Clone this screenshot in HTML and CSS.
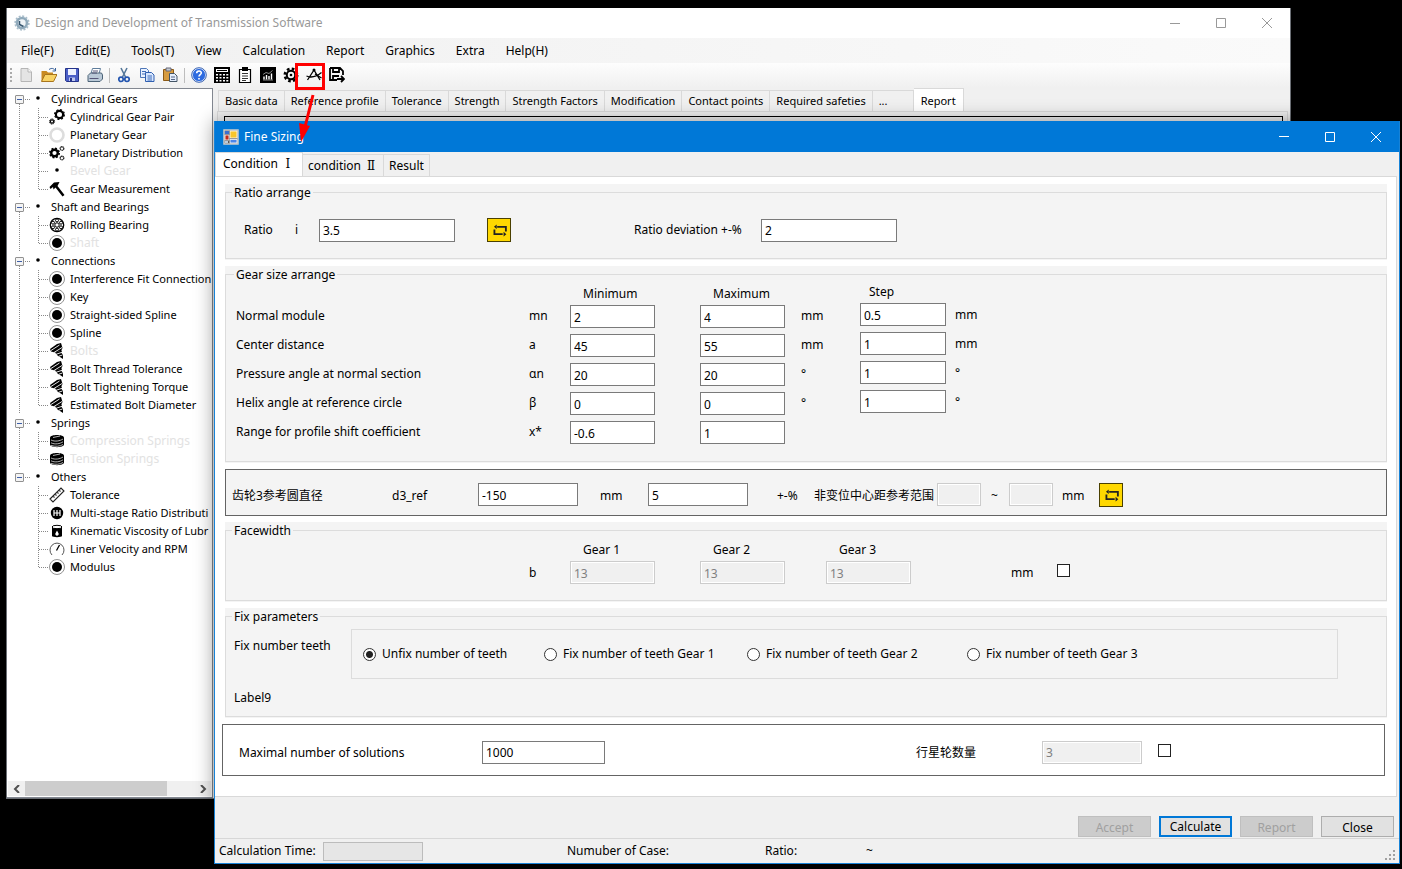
FILE: index.html
```html
<!DOCTYPE html>
<html lang="en">
<head>
  <meta charset="utf-8">
  <title>Design and Development of Transmission Software</title>
  <link rel="stylesheet" href="styles.css">
</head>
<body>

<!-- shared icons -->
<svg class="defs" aria-hidden="true">
  <symbol id="dot" viewBox="0 0 16 16"><circle cx="8" cy="7" r="1.8"/></symbol>
  <symbol id="disc" viewBox="0 0 16 16"><circle cx="8" cy="8" r="7.5" fill="#fff" stroke="#777" stroke-width=".8"/><circle cx="8" cy="8" r="5"/></symbol>
  <symbol id="gear" viewBox="0 0 16 16">
    <circle cx="8" cy="8" r="4.2" fill="none" stroke="#000" stroke-width="2"/>
    <circle cx="8" cy="8" r="6.2" fill="none" stroke="#000" stroke-width="2.6" stroke-dasharray="2.6 2.27"/>
    <circle cx="8" cy="8" r="1.3"/>
  </symbol>
  <symbol id="pair" viewBox="0 0 16 16">
    <circle cx="10.5" cy="5.5" r="3.6" fill="none" stroke="#000" stroke-width="2.2"/>
    <circle cx="10.5" cy="5.5" r="4.9" fill="none" stroke="#000" stroke-width="1.2" stroke-dasharray="2 1.85"/>
    <circle cx="3" cy="12.5" r="1.6" fill="none" stroke="#000" stroke-width="1.2"/>
    <circle cx="3" cy="12.5" r="2.6" fill="none" stroke="#000" stroke-width="1" stroke-dasharray="1.2 .84"/>
  </symbol>
  <symbol id="ring" viewBox="0 0 16 16"><circle cx="8" cy="8" r="6.5" fill="none" stroke="#ddd" stroke-width="2.6"/></symbol>
  <symbol id="gears" viewBox="0 0 16 16">
    <circle cx="5.5" cy="8" r="3.3" fill="none" stroke="#000" stroke-width="2.4"/>
    <circle cx="5.5" cy="8" r="4.7" fill="none" stroke="#000" stroke-width="1.6" stroke-dasharray="1.9 1.79"/>
    <circle cx="13" cy="3.5" r="1.8" fill="none" stroke="#222" stroke-width="1.3" stroke-dasharray="1.3 .3"/>
    <circle cx="13" cy="13" r="1.8" fill="none" stroke="#222" stroke-width="1.3" stroke-dasharray="1.3 .3"/>
  </symbol>
  <symbol id="caliper" viewBox="0 0 16 16"><path d="M.5 6 5 1.500 10.500 1 8.500 5 15.500 14 13.500 15.500 6.500 6.500 4.500 8.500 4 6 1.500 8z"/></symbol>
  <symbol id="bearing" viewBox="0 0 16 16">
    <circle cx="8" cy="8" r="6.7" fill="#fff" stroke="#000" stroke-width="1.3"/>
    <circle cx="8" cy="8" r="2.2" fill="none" stroke="#000"/>
    <g fill="#fff" stroke="#000"><circle cx="8" cy="3.4" r="1.5"/><circle cx="12" cy="5.7" r="1.5"/><circle cx="12" cy="10.3" r="1.5"/><circle cx="8" cy="12.6" r="1.5"/><circle cx="4" cy="10.3" r="1.5"/><circle cx="4" cy="5.7" r="1.5"/></g>
  </symbol>
  <symbol id="bolt" viewBox="0 0 16 16">
    <path d="M1 6 8 1 12 0 13.500 5 12 8 6 9.500 2 8.500z"/>
    <path d="M6 9.500 13 7.500 12.500 10 14 12 14 16 11 14 9 13z"/>
    <path d="M2 7.500 10.500 2M5 9.500 13 4.500M7 11.300 13 9.300M9.500 13.300 13.500 12" stroke="#fff" stroke-width=".9"/>
  </symbol>
  <symbol id="spring" viewBox="0 0 16 16">
    <path d="M1 4.500C1 1 15 1 15 4.500V11.500C15 15 1 15 1 11.500z"/>
    <path d="M4 4.500 11 3M2 7C6 9 11 8 14 6M2 9.800C6 11.800 11 10.800 14 8.800M2 12.300C6 14 11 13.400 14 11.500" fill="none" stroke="#fff" stroke-width=".7"/>
  </symbol>
  <symbol id="ruler" viewBox="0 0 16 16"><path d="M1 12 12 1 15 4 4 15zM4 9l1.500 1.500M6 7l1.500 1.500M8 5l1.500 1.500M10 3l1.500 1.500" fill="#fff" stroke="#222" stroke-width="1.1"/></symbol>
  <symbol id="stage" viewBox="0 0 16 16"><circle cx="8" cy="8" r="6.2"/><path d="M5 5v6M8 5v6M11 5v6M5 8h6" stroke="#fff" stroke-width="1.2"/></symbol>
  <symbol id="drum" viewBox="0 0 16 16"><path d="M3 4V13C3 14.500 13 14.500 13 13V4z"/><ellipse cx="8" cy="4" rx="5" ry="1.7" fill="#fff" stroke="#000"/><path d="M8 7.500 9.600 10.500A1.700 1.700 0 1 1 6.400 10.500z" fill="#fff"/></symbol>
  <symbol id="gauge" viewBox="0 0 16 16"><path d="M3 14A7 7 0 1 1 13 14" fill="none" stroke="#555"/><path d="M7.500 9.500 10.500 4" stroke="#000" stroke-width="1.3"/></symbol>
  <symbol id="swap" viewBox="0 0 24 24">
    <path d="M19.500 13.500V8.500H10M7 11.500V16.500H16" fill="none" stroke="#222" stroke-width="2"/>
    <path d="M6.500 8.500 9.500 6V11zM20 16.500 17 14V19z" fill="#222"/>
  </symbol>
</svg>

<div class="window main">
  <header class="titlebar">
    <svg class="icon" viewBox="0 0 16 16"><circle cx="8" cy="8" r="5" fill="#eef3f6" stroke="#8fa9ba" stroke-width="2.6"/><circle cx="8" cy="8" r="6.8" fill="none" stroke="#a9bdca" stroke-width="1.8" stroke-dasharray="2 1.56"/><path d="M5.500 6v3.500l4 2" fill="none" stroke="#35566f" stroke-width="1.5"/></svg>
    <h1>Design and Development of Transmission Software</h1>
    <div class="controls">
      <button aria-label="Minimize"><svg viewBox="0 0 10 10"><path d="M0 5.500h10"/></svg></button>
      <button aria-label="Maximize"><svg viewBox="0 0 10 10"><path d="M.5.500h9v9h-9z"/></svg></button>
      <button aria-label="Close"><svg viewBox="0 0 10 10"><path d="M0 0l10 10M10 0 0 10"/></svg></button>
    </div>
  </header>
  <nav class="menubar">
    <button>File(F)</button><button>Edit(E)</button><button>Tools(T)</button><button>View</button><button>Calculation</button><button>Report</button><button>Graphics</button><button>Extra</button><button>Help(H)</button>
  </nav>
  <div class="toolbar">
    <span class="handle"></span>
    <button aria-label="New"><svg viewBox="0 0 16 16"><path d="M3 1.500h7l3.500 3.500v9.500H3z" fill="#e4e4e4" stroke="#b5b5b5"/><path d="M10 1.500V5h3.500" fill="#fafafa" stroke="#b5b5b5"/></svg></button>
    <button aria-label="Open"><svg viewBox="0 0 16 16"><path d="M.5 14V4h5l1.500 1.500h5V14z" fill="#c98a20"/><path d="M.5 14.500 4 7.500h12L12.500 14.500z" fill="#f8d264" stroke="#a8751c"/><path d="M8 2.500c3-2 5-1 6 1M14.500 1v3h-3" fill="none" stroke="#39629b"/></svg></button>
    <button aria-label="Save"><svg viewBox="0 0 16 16"><path d="M1.500 1.500h13v13h-12l-1-1z" fill="#4b5fc7" stroke="#24338a"/><path d="M4 2h8v6H4z" fill="#eef2ff"/><path d="M5 10.500h6V14H5z" fill="#bfc8ee"/><path d="M6 11h2v3H6z" fill="#24338a"/></svg></button>
    <button aria-label="Print"><svg viewBox="0 0 16 16"><path d="M5.500 1.500h8l-2 7h-8z" fill="#fff" stroke="#5e7d9b"/><path d="M1 8.500 3.500 6h11L15.500 8v4L13 14.500H1z" fill="#bac9d7" stroke="#4d6478"/><path d="M2.500 11.500h9M6 4h5M5 6h5" stroke="#557"/></svg></button>
    <span class="sep"></span>
    <button aria-label="Cut"><svg viewBox="0 0 16 16"><path d="M5 1 9.500 10M11 1 6.500 10" stroke="#56789a" stroke-width="1.6"/><circle cx="5" cy="12.3" r="2.2" fill="none" stroke="#2456b0" stroke-width="1.7"/><circle cx="11" cy="12.3" r="2.2" fill="none" stroke="#2456b0" stroke-width="1.7"/></svg></button>
    <button aria-label="Copy"><svg viewBox="0 0 16 16"><path d="M1.500 1.500h6l2 2v7h-8z" fill="#e9f1ff" stroke="#4f77b8"/><path d="M6.500 5.500h6l2.500 2.500v6.500H6.500z" fill="#d7e6ff" stroke="#2f5fb0"/><path d="M3 4.500h4M3 7h3M8.500 9h4.500M8.500 11h4.500M8.500 13h4.500" stroke="#3f6cb8"/></svg></button>
    <button aria-label="Paste"><svg viewBox="0 0 16 16"><path d="M1.500 2.500h10v11h-10z" fill="#d79c40" stroke="#8b5a16"/><path d="M4 1h5v3H4z" fill="#c5ccd4" stroke="#667"/><path d="M7.500 6.500h5l2.500 2.500v5.500H7.500z" fill="#e4edfb" stroke="#456"/><path d="M9 10h4M9 12.500h4" stroke="#568"/></svg></button>
    <span class="sep"></span>
    <button aria-label="Help"><svg viewBox="0 0 16 16"><circle cx="8" cy="8" r="6.6" fill="#2d6be0" stroke="#e3edff"/><circle cx="8" cy="8" r="7.3" fill="none" stroke="#2451a8" stroke-width=".9"/><path d="M5.700 6.300C5.700 3.300 10.500 3.400 10.300 6 10.200 7.600 8 7.700 8 9.500M8 11v1.500" fill="none" stroke="#fff" stroke-width="1.6"/></svg></button>
    <button aria-label="Calculator"><svg viewBox="0 0 16 16"><path d="M0 0h16v16H0z"/><path d="M2 2h12v3H2zM2 7h2v1.500H2zM5.500 7h2v1.500h-2zM9 7h2v1.500H9zM12.300 7h2v1.500h-2zM2 10h2v1.500H2zM5.500 10h2v1.500h-2zM9 10h2v1.500H9zM12.300 10h2v1.500h-2zM2 13h2v1.500H2zM5.500 13h2v1.500h-2zM9 13h2v1.500H9zM12.300 13h2v1.500h-2z" fill="#fff"/><path d="M3 3.500h10" stroke="#000"/></svg></button>
    <button aria-label="Protocol"><svg viewBox="0 0 16 16"><path d="M2.500 2.500h11v13h-11z" fill="#fff" stroke="#000" stroke-width="1.2"/><path d="M5 0h6v4H5z"/><path d="M5 6.500h6M5 9h6M5 11.500h6M5 13.500h4" stroke="#333"/></svg></button>
    <button aria-label="Chart"><svg viewBox="0 0 16 16"><path d="M0 0h16v16H0z"/><path d="M4 12.500V9.500M6.500 12.500V8M9 12.500V9M11.500 12.500V6.500" stroke="#fff" stroke-width="1.4"/><path d="M3 7.500 6 5.500l3 1L12.500 3.500M3 13h10" fill="none" stroke="#aaa" stroke-width=".8"/></svg></button>
    <button aria-label="Settings"><svg><use href="#gear"/></svg></button>
    <button aria-label="Fine sizing"><svg viewBox="0 0 16 16"><path d="M8 3 1.500 13M8 3l6 10M.5 9C5 11 10 10 15.500 5.500M9 7l6.500 4" fill="none" stroke="#000" stroke-width="1.3"/><circle cx="8" cy="3" r="1.5"/></svg></button>
    <button aria-label="Save as"><svg viewBox="0 0 16 16"><path d="M1 1h10l3 3v4M1 1v12h7M4 1v4h6V1M4 13V9h6" fill="none" stroke="#000" stroke-width="1.8"/><path d="M8 12h6M12 9l3 3-3 3" fill="none" stroke="#000" stroke-width="1.8"/></svg></button>
  </div>

  <div class="workspace">
    <aside class="sidebar">
      <ul class="tree">
        <li>
          <div class="root"><button class="expander" aria-label="Collapse"></button><i class="twig"></i><svg><use href="#dot"/></svg>Cylindrical Gears</div>
          <ul>
            <li><i class="twig"></i><svg><use href="#pair"/></svg>Cylindrical Gear Pair</li>
            <li><i class="twig"></i><svg><use href="#ring"/></svg>Planetary Gear</li>
            <li><i class="twig"></i><svg><use href="#gears"/></svg>Planetary Distribution</li>
            <li class="off"><i class="twig"></i><svg><use href="#dot"/></svg>Bevel Gear</li>
            <li><i class="twig"></i><svg><use href="#caliper"/></svg>Gear Measurement</li>
          </ul>
        </li>
        <li>
          <div class="root"><button class="expander" aria-label="Collapse"></button><i class="twig"></i><svg><use href="#dot"/></svg>Shaft and Bearings</div>
          <ul>
            <li><i class="twig"></i><svg><use href="#bearing"/></svg>Rolling Bearing</li>
            <li class="off"><i class="twig"></i><svg><use href="#disc"/></svg>Shaft</li>
          </ul>
        </li>
        <li>
          <div class="root"><button class="expander" aria-label="Collapse"></button><i class="twig"></i><svg><use href="#dot"/></svg>Connections</div>
          <ul>
            <li><i class="twig"></i><svg><use href="#disc"/></svg>Interference Fit Connection</li>
            <li><i class="twig"></i><svg><use href="#disc"/></svg>Key</li>
            <li><i class="twig"></i><svg><use href="#disc"/></svg>Straight-sided Spline</li>
            <li><i class="twig"></i><svg><use href="#disc"/></svg>Spline</li>
            <li class="off"><i class="twig"></i><svg><use href="#bolt"/></svg>Bolts</li>
            <li><i class="twig"></i><svg><use href="#bolt"/></svg>Bolt Thread Tolerance</li>
            <li><i class="twig"></i><svg><use href="#bolt"/></svg>Bolt Tightening Torque</li>
            <li><i class="twig"></i><svg><use href="#bolt"/></svg>Estimated Bolt Diameter</li>
          </ul>
        </li>
        <li>
          <div class="root"><button class="expander" aria-label="Collapse"></button><i class="twig"></i><svg><use href="#dot"/></svg>Springs</div>
          <ul>
            <li class="off"><i class="twig"></i><svg><use href="#spring"/></svg>Compression Springs</li>
            <li class="off"><i class="twig"></i><svg><use href="#spring"/></svg>Tension Springs</li>
          </ul>
        </li>
        <li>
          <div class="root"><button class="expander" aria-label="Collapse"></button><i class="twig"></i><svg><use href="#dot"/></svg>Others</div>
          <ul>
            <li><i class="twig"></i><svg><use href="#ruler"/></svg>Tolerance</li>
            <li><i class="twig"></i><svg><use href="#stage"/></svg>Multi-stage Ratio Distributi</li>
            <li><i class="twig"></i><svg><use href="#drum"/></svg>Kinematic Viscosity of Lubr</li>
            <li><i class="twig"></i><svg><use href="#gauge"/></svg>Liner Velocity and RPM</li>
            <li><i class="twig"></i><svg><use href="#disc"/></svg>Modulus</li>
          </ul>
        </li>
      </ul>
      <div class="scrollbar">
        <button aria-label="Scroll left"><svg viewBox="0 0 8 8"><path d="M6 0 2 4l4 4"/></svg></button>
        <span class="thumb"></span>
        <button aria-label="Scroll right"><svg viewBox="0 0 8 8"><path d="M2 0l4 4-4 4"/></svg></button>
      </div>
    </aside>
    <main class="editor">
      <div class="tabs" role="tablist">
        <button role="tab">Basic data</button><button role="tab">Reference profile</button><button role="tab">Tolerance</button><button role="tab">Strength</button><button role="tab">Strength Factors</button><button role="tab">Modification</button><button role="tab">Contact points</button><button role="tab">Required safeties</button><button role="tab" class="more">...</button><button role="tab" class="active" aria-selected="true">Report</button>
      </div>
      <div class="sheet"><div class="report"></div></div>
    </main>
  </div>
</div>

<div class="window dialog" role="dialog" aria-labelledby="dlg-title">
  <header class="titlebar">
    <svg class="icon" viewBox="0 0 16 16"><path d="M1 1h14v14H1z" fill="#555" stroke="#ccc" stroke-width="1.5"/><path d="M2 2h4v3H2z" fill="#3b6fd0"/><path d="M2 6h4v5H2z" fill="#c22a1a" stroke="#fff" stroke-width=".8"/><path d="M7 2h7v7H7z" fill="#f8c62c" stroke="#fff" stroke-width=".8"/><path d="M7 10.500h7V14H7z" fill="#4d86e8" stroke="#fff" stroke-width=".8"/><path d="M2 12h3v2H2z" fill="#bcd"/></svg>
    <h2 id="dlg-title">Fine Sizing</h2>
    <div class="controls">
      <button aria-label="Minimize"><svg viewBox="0 0 10 10"><path d="M0 4.500h10"/></svg></button>
      <button aria-label="Maximize"><svg viewBox="0 0 10 10"><path d="M.5.500h9v9h-9z"/></svg></button>
      <button aria-label="Close"><svg viewBox="0 0 10 10"><path d="M0 0l10 10M10 0 0 10"/></svg></button>
    </div>
  </header>

  <div class="tabs" role="tablist">
    <button role="tab" class="active" aria-selected="true">Condition <span class="roman">Ⅰ</span></button><button role="tab">condition <span class="roman">Ⅱ</span></button><button role="tab">Result</button>
  </div>

  <form class="page">
    <div class="group">
      <fieldset class="ratio">
        <legend>Ratio arrange</legend>
        <div class="ratio-row">
          <label for="ratio">Ratio</label><span>i</span>
          <input id="ratio" type="text" value="3.5">
          <button type="button" class="swap" aria-label="Update ratio"><svg><use href="#swap"/></svg></button>
          <label for="dev">Ratio deviation +-%</label>
          <input id="dev" type="text" value="2">
        </div>
      </fieldset>
    </div>

    <div class="group">
      <fieldset class="sizes">
        <legend>Gear size arrange</legend>
        <div class="limits">
          <span class="head min">Minimum</span><span class="head max">Maximum</span>
          <label for="mn">Normal module</label><span>mn</span><input id="mn" type="text" value="2"><input type="text" aria-label="Maximum module" value="4"><span>mm</span>
          <label for="a">Center distance</label><span>a</span><input id="a" type="text" value="45"><input type="text" aria-label="Maximum distance" value="55"><span>mm</span>
          <label for="an">Pressure angle at normal section</label><span>αn</span><input id="an" type="text" value="20"><input type="text" aria-label="Maximum pressure angle" value="20"><span>°</span>
          <label for="b">Helix angle at reference circle</label><span>β</span><input id="b" type="text" value="0"><input type="text" aria-label="Maximum helix angle" value="0"><span>°</span>
          <label for="x">Range for profile shift coefficient</label><span>x*</span><input id="x" type="text" value="-0.6"><input type="text" aria-label="Maximum shift" value="1">
        </div>
        <div class="steps">
          <span class="head">Step</span>
          <input id="s1" type="text" aria-label="Module step" value="0.5"><label for="s1">mm</label>
          <input id="s2" type="text" aria-label="Distance step" value="1"><label for="s2">mm</label>
          <input id="s3" type="text" aria-label="Pressure angle step" value="1"><label for="s3">°</label>
          <input id="s4" type="text" aria-label="Helix angle step" value="1"><label for="s4">°</label>
        </div>
      </fieldset>
    </div>

    <div class="box reference">
      <label for="d3">齿轮3参考圆直径</label><span>d3_ref</span>
      <input id="d3" class="w100" type="text" value="-150"><span>mm</span>
      <input id="tol" class="w100" type="text" value="5"><label for="tol">+-%</label>
      <label for="from">非变位中心距参考范围</label>
      <input id="from" class="w44" type="text" disabled><span>~</span>
      <input id="to" class="w44" type="text" disabled><label for="to">mm</label>
      <button type="button" class="swap" aria-label="Update range"><svg><use href="#swap"/></svg></button>
    </div>

    <div class="group">
      <fieldset class="facewidth">
        <legend>Facewidth</legend>
        <div class="face-row">
          <label class="head g1" for="b1">Gear 1</label><label class="head" for="b2">Gear 2</label><label class="head" for="b3">Gear 3</label>
          <span class="sym">b</span>
          <input id="b1" type="text" value="13" disabled><input id="b2" type="text" value="13" disabled><input id="b3" type="text" value="13" disabled>
          <label for="bfix">mm</label><input id="bfix" type="checkbox">
        </div>
      </fieldset>
    </div>

    <div class="group">
      <fieldset class="fix">
        <legend>Fix parameters</legend>
        <div class="fix-row">
          <span>Fix number teeth</span>
          <div class="choices">
            <label><input type="radio" name="teeth" checked>Unfix number of teeth</label>
            <label><input type="radio" name="teeth">Fix number of teeth Gear 1</label>
            <label><input type="radio" name="teeth">Fix number of teeth Gear 2</label>
            <label><input type="radio" name="teeth">Fix number of teeth Gear 3</label>
          </div>
        </div>
        <p>Label9</p>
      </fieldset>
    </div>

    <div class="box solutions">
      <label for="max">Maximal number of solutions</label>
      <input id="max" type="text" value="1000">
      <label for="planets">行星轮数量</label>
      <input id="planets" class="w100" type="text" value="3" disabled>
      <input type="checkbox" aria-label="Set number of planets">
    </div>
  </form>

  <div class="actions">
    <button disabled>Accept</button>
    <button class="default">Calculate</button>
    <button disabled>Report</button>
    <button>Close</button>
  </div>
  <footer class="status">
    <span>Calculation Time:</span>
    <span class="progress"></span>
    <span>Numuber of Case:</span>
    <span>Ratio:</span>
    <span>~</span>
    <svg class="grip" viewBox="0 0 11 11"><path d="M8 0h2v2H8zM4 4h2v2H4zM8 4h2v2H8zM0 8h2v2H0zM4 8h2v2H4zM8 8h2v2H8z"/></svg>
  </footer>
</div>

<!-- callout from the toolbar button to the dialog -->
<svg class="callout" viewBox="0 0 32 82" aria-hidden="true">
  <path d="M1.500 1.500h27v24h-27z" fill="none" stroke="#f00" stroke-width="3"/>
  <path d="M18 32 10 64" stroke="#f00" stroke-width="3"/>
  <path d="M4 60 15 63 6 79z" fill="#f00"/>
</svg>

</body>
</html>
```

FILE: styles.css
```css
* { box-sizing: border-box; }

body {
    margin: 0;
    height: 100vh;
    overflow: hidden;
    background: #000;
    color: #000;
    font: 12px/16px "Noto Sans", "Noto Sans CJK SC", sans-serif;
    white-space: nowrap;
}
button, input { font: inherit; color: inherit; }
button { background: none; border: 0; padding: 0; }
h1, h2, p, ul { margin: 0; padding: 0; font-size: 12px; font-weight: normal; }
ul { list-style: none; }
.defs { display: none; }

/* windows */
.window { position: absolute; display: flex; flex-direction: column; background: #f0f0f0; }
.main { top: 8px; left: 6px; right: 111px; bottom: 70px; border: 1px solid #6b6f75; border-top: 0; }
.dialog {
    top: 121px; left: 214px; right: 2px; bottom: 5px;
    border: 1px solid #1883d7;
    border-top: 0;
    box-shadow: 0 0 18px rgba(0,0,0,.4);
}

.titlebar { display: flex; align-items: center; height: 30px; flex: none; background: #fff; color: #999; padding-left: 7px; }
.titlebar .icon { width: 16px; height: 16px; margin-right: 5px; }
.controls { margin-left: auto; display: flex; }
.controls button { width: 46px; height: 30px; display: flex; align-items: center; justify-content: center; }
.controls svg { width: 10px; height: 10px; fill: none; stroke: currentColor; overflow: visible; }
.dialog .titlebar { height: 31px; background: #0078d7; color: #fff; padding-left: 8px; }

/* menu and toolbar */
.menubar { display: flex; gap: 21px; height: 25px; flex: none; padding-left: 14px; background: linear-gradient(90deg, #f0f0f0, #fafafa); }
.toolbar { display: flex; align-items: center; gap: 7px; height: 25px; flex: none; padding: 0 0 1px 3px; background: linear-gradient(#fdfdfd, #f0f0f0); }
.toolbar svg { display: block; width: 16px; height: 16px; }
.handle { width: 2px; height: 15px; margin-right: -1px; background: repeating-linear-gradient(#aaa 0 2px, transparent 2px 4px); }
.sep { width: 1px; height: 15px; margin: 0 -1px; background: #bdbdbd; }

/* tree */
.workspace { flex: 1; display: flex; min-height: 0; font-size: 11px; }
.sidebar { width: 206px; flex: none; display: flex; flex-direction: column; overflow: hidden; background: #fff; border: 1px solid #828790; border-left: 0; }
.tree, .tree ul { font-size: 11px; }
.tree { flex: 1; padding: 1px 0 0 8px; }
.tree svg { flex: none; width: 16px; height: 16px; }
.tree > li:not(:last-child) {
    background: repeating-linear-gradient(#888 0 1px, transparent 1px 2px) 4px 14px / 1px 100% no-repeat;
}
.root, .tree li li { display: flex; align-items: center; height: 18px; }
.root svg { margin: 0 5px 0 -1px; }
.expander { width: 9px; height: 9px; flex: none; border: 1px solid #919191; border-radius: 1px; background: linear-gradient(#3e5fa8, #3e5fa8) center / 5px 1px no-repeat #f4f4f4; }
.twig { height: 1px; width: 6px; flex: none; margin-left: 1px; background: repeating-linear-gradient(90deg, #888 0 1px, transparent 1px 2px); }
.tree ul {
    padding-left: 23px;
    background: repeating-linear-gradient(#888 0 1px, transparent 1px 2px) 23px 0 / 1px calc(100% - 9px) no-repeat;
}
.tree li li .twig { width: 10px; }
.tree li li svg { margin-right: 5px; }
.tree li.off { color: #e2e2e2; font-size: 12px; }

.scrollbar { display: flex; height: 15px; flex: none; background: #f0f0f0; margin: 0 1px 1px; }
.scrollbar button { width: 17px; display: flex; align-items: center; justify-content: center; }
.scrollbar svg { width: 8px; height: 8px; fill: none; stroke: #505050; stroke-width: 2; }
.thumb { width: 142px; background: #cdcdcd; margin-right: auto; }

/* tabs */
.tabs { display: flex; align-items: flex-end; flex: none; }
.tabs button { border: 1px solid #d9d9d9; border-width: 1px 1px 0 0; background: #f0f0f0; padding: 0 6px; height: 21px; }
.tabs button:first-child { border-left-width: 1px; }
.tabs button.active { height: 24px; background: #fff; margin-bottom: -1px; padding: 0 7px; }

.editor { flex: 1; display: flex; flex-direction: column; padding: 0 2px 0 4px; }
.editor .tabs { padding-left: 1px; height: 23px; }
.tabs .more { width: 41px; text-align: left; }
.sheet { flex: 1; display: flex; padding: 4px 4px 5px 6px; border: 1px solid #d9d9d9; }
.report { flex: 1; border: 1px solid #000; }

.dialog .tabs { height: 24px; }
.dialog .tabs button { height: 22px; padding: 0 5px; }
.dialog .tabs .active { height: 25px; padding: 0 7px 2px; }
.roman { display: inline-block; width: 14px; text-align: center; font-family: "DejaVu Serif", serif; }

/* form page */
.page {
    flex: 1;
    display: flex;
    flex-direction: column;
    gap: 6px;
    margin-right: 2px;
    padding: 7px 9px 0 10px;
    background: #fff;
    border: 1px solid #d9d9d9;
    border-left: 0;
}
.group { background: #f4f4f4; padding-bottom: 1px; }
fieldset { margin: 0; min-width: 0; padding: 0 0 0 8px; border: 1px solid #dcdcdc; }
legend { margin-left: -2px; padding: 0 2px; line-height: 17px; }

input[type=text] { width: 85px; height: 23px; padding: 1px 3px 0; border: 1px solid #7a7a7a; background: #fff; border-radius: 0; }
input[type=text]:disabled { background: #f0f0f0; border-color: #ccc; box-shadow: inset 0 0 0 1px #fff; color: #808080; }
input.w100[type=text] { width: 100px; }
input.w44[type=text] { width: 44px; }
input[type=checkbox] { appearance: none; width: 13px; height: 13px; margin: 0 0 4px; border: 1px solid #222; background: #fff; }
input[type=radio] { appearance: none; width: 13px; height: 13px; margin: 0 6px 0 0; border: 1px solid #333; border-radius: 50%; background: #fff; }
input[type=radio]:checked { background: radial-gradient(#222 0 3px, #fff 4px); }
.swap { width: 24px; height: 24px; background: #ffd800; border: 1px solid #4a4000; }
.swap svg { display: block; width: 22px; height: 22px; }
.head { height: 22px; padding: 3px 0 0 13px; }

.ratio-row { display: grid; grid-template-columns: 51px 24px 168px 147px 127px 136px; align-items: center; padding: 17px 0 16px 10px; }
.ratio-row input[type=text] { width: 136px; }

.sizes { padding: 0 0 17px 10px; }
.sizes > div { float: left; }
.limits { display: grid; grid-template-columns: 293px 41px 130px 101px 59px; row-gap: 6px; align-items: center; }
.limits label, .limits span:not(.head) { padding-bottom: 2px; }
.limits .head, .steps .head { margin-bottom: -6px; }
.limits .min { grid-column: 3; }
.limits .max { grid-column: 4 / 6; }
.steps { display: grid; grid-template-columns: 95px 40px; row-gap: 6px; align-items: center; margin-top: -2px; }
.steps .head { grid-column: 1 / 3; padding-left: 9px; }
.steps input[type=text] { width: 86px; }

.box { border: 1px solid #646464; background: #f4f4f4; }
.box label, .box span { padding-top: 2px; }
.reference { display: grid; grid-template-columns: 160px 86px 122px 48px 129px 37px 123px 54px 18px 53px 37px 24px; align-items: center; height: 47px; padding: 4px 0 0 6px; }

.face-row { display: grid; grid-template-columns: 295px 41px 130px 126px 185px 46px 13px; align-items: center; padding-bottom: 16px; }
.g1 { grid-column: 3; }
.sym { grid-column: 2; }

.fix-row { display: flex; margin-top: 4px; }
.fix-row > span { width: 117px; padding-top: 9px; }
.choices { flex: 1; margin-right: 48px; display: grid; grid-template-columns: 181px 203px 220px auto; align-items: center; height: 50px; padding-left: 11px; border: 1px solid #dcdcdc; }
.choices label { display: flex; align-items: center; }
.fix p { padding: 11px 0 10px; line-height: 16px; }

.solutions { display: grid; grid-template-columns: 243px 434px 126px 116px 13px; align-items: center; height: 52px; margin: 0 2px 0 -3px; padding: 4px 0 0 16px; background: #fff; }
.solutions input[type=text]:not(.w100) { width: 123px; }

.actions { display: flex; justify-content: flex-end; align-items: flex-end; gap: 8px; height: 41px; flex: none; padding: 0 5px 1px; }
.actions button { width: 73px; height: 21px; padding-top: 1px; line-height: 17px; background: #e1e1e1; border: 1px solid #adadad; }
.actions button:disabled { background: #ccc; border-color: #bfbfbf; color: #a0a0a0; }
.actions .default { border: 2px solid #0078d7; line-height: 16px; }

.status { display: grid; grid-template-columns: 104px 244px 198px 101px 1fr 11px; align-items: center; height: 25px; flex: none; padding: 0 3px 0 4px; border-top: 1px solid #d7d7d7; }
.progress { width: 100px; height: 19px; border: 1px solid #bcbcbc; background: #e6e6e6; }
.grip { width: 11px; height: 11px; align-self: end; margin-bottom: 2px; fill: #a0a0a0; }

.callout { position: absolute; left: 295px; top: 63px; width: 32px; height: 82px; pointer-events: none; }
```
